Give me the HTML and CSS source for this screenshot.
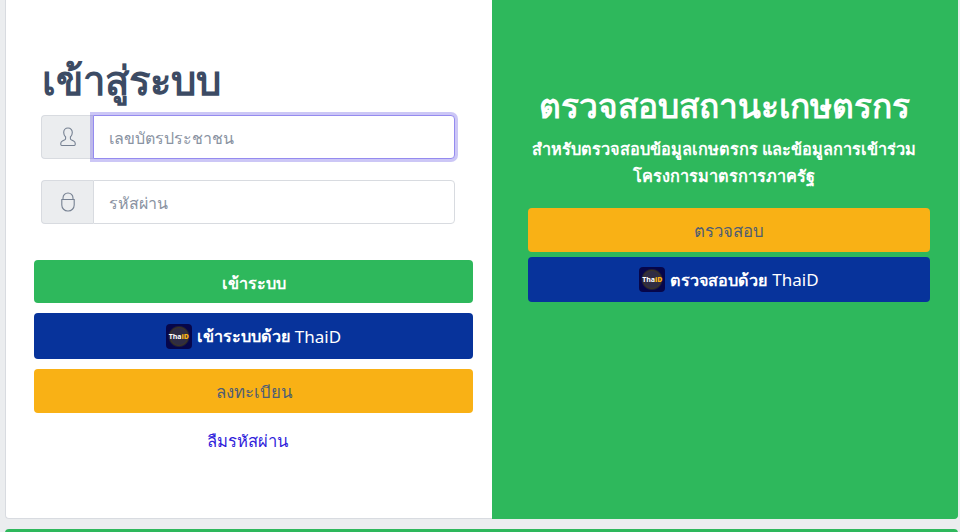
FILE: index.html
```html
<!DOCTYPE html>
<html lang="th">
<head>
<meta charset="utf-8">
<title>เข้าสู่ระบบ</title>
<link rel="stylesheet" href="styles.css">
</head>
<body>
<main class="card-group">
  <section class="card login">
    <h1 class="login-title">เข้าสู่ระบบ</h1>
    <div class="input-group focused">
      <span class="addon">
        <svg class="icon" viewBox="0 0 16 20" fill="none" stroke="currentColor" stroke-width="1.1"><path d="M8 1c-2.700 0-4.300 1.900-4.300 4.500 0 1.900.8 3.400 1.900 4.500v1.500c0 .8-.4 1.300-1.200 1.600l-2 .9c-1 .5-1.600 1.200-1.600 2.300v1.300c0 .6.400.9.900.9h12.600c.5 0 .9-.3.9-.9v-1.300c0-1.100-.6-1.800-1.600-2.300l-2-.9c-.8-.3-1.200-.8-1.200-1.600V10c1.100-1.100 1.900-2.600 1.900-4.500C12.300 2.900 10.700 1 8 1z"/></svg>
      </span>
      <input class="control focus" type="text" placeholder="เลขบัตรประชาชน">
    </div>
    <div class="input-group second">
      <span class="addon">
        <svg class="icon" viewBox="0 0 16 20" fill="none" stroke="currentColor" stroke-width="1.1"><path d="M3 7.500V6a5 5 0 0 1 10 0v1.500"/><path d="M1.800 7.500h12.400V13a6 6 0 0 1-6 6h-.4a6 6 0 0 1-6-6z"/></svg>
      </span>
      <input class="control" type="password" placeholder="รหัสผ่าน">
    </div>
    <div class="actions">
      <button class="btn green" type="button">เข้าระบบ</button>
      <button class="btn blue" type="button">
        <span class="thaid"><span>Tha</span><b>iD</b></span><strong>เข้าระบบด้วย</strong> ThaiD
      </button>
      <button class="btn amber" type="button">ลงทะเบียน</button>
    </div>
    <a class="forgot" href="#">ลืมรหัสผ่าน</a>
  </section>
  <section class="card check">
    <h2 class="check-title">ตรวจสอบสถานะเกษตรกร</h2>
    <p class="check-text">สำหรับตรวจสอบข้อมูลเกษตรกร และข้อมูลการเข้าร่วม<br>โครงการมาตรการภาครัฐ</p>
    <button class="btn amber tall" type="button">ตรวจสอบ</button>
    <button class="btn blue" type="button">
      <span class="thaid"><span>Tha</span><b>iD</b></span><strong>ตรวจสอบด้วย</strong> ThaiD
    </button>
  </section>
</main>
<div class="footer-bar"></div>
</body>
</html>
```
FILE: styles.css
```css
* { box-sizing: border-box; }
html, body { margin: 0; height: 532px; overflow: hidden; }
body {
  background: #ebedef;
  font-family: "Noto Sans", "Open Sans", "Liberation Sans", sans-serif;
  color: #4f5d73;
  font-size: 16px;
  padding: 0 2px 0 5px;
}
.card-group { display: flex; height: 519px; }
.card { border: 1px solid #d8dbe0; border-top: 0; }
.login {
  width: 487px;
  background: #fff;
  border-right: 0;
  border-radius: 0 0 0 4px;
  padding: 45px 19px 0 28px;
}
.login-title {
  margin: 0 0 0 8px;
  font-size: 40px;
  line-height: 70px;
  font-weight: 600;
  color: #3c4b64;
}
.input-group { display: flex; width: 414px; margin-left: 7px; height: 44px; }
.second { margin-top: 21px; }
.addon {
  width: 52px;
  display: flex;
  align-items: center;
  justify-content: center;
  background: #ebedef;
  border: 1px solid #d8dbe0;
  border-right: 0;
  border-radius: 4px 0 0 4px;
  color: #768192;
}
.icon { width: 16px; height: 20px; display: block; }
.control {
  flex: 1;
  min-width: 0;
  border: 1px solid #d8dbe0;
  border-radius: 0 4px 4px 0;
  padding: 2px 14.500px 0;
  font: inherit;
  color: #768192;
  background: #fff;
  outline: 0;
}
.control::placeholder { color: #8a93a2; opacity: 1; }
.control.focus {
  border-color: #958bef;
  box-shadow: 0 0 0 3px rgba(50, 31, 219, .25);
}
.actions { display: flex; flex-direction: column; gap: 10px; margin-top: 36px; }
.actions .blue { height: 46px; }
.btn {
  display: flex;
  align-items: center;
  justify-content: center;
  width: 100%;
  height: 45px;
  border: 0;
  border-radius: 4px;
  font: inherit;
  font-size: 17px;
  font-weight: 400;
  padding: 0;
}
.btn strong { font-size: 16.200px; font-weight: 600; margin-right: 5px; }
.green { height: 43px; padding-top: 2px; background: #2eb85c; color: #fff; font-size: 16.200px; font-weight: 600; }
.blue { background: #07339b; color: #fff; }
.amber { height: 44px; padding-top: 2px; background: #f9b115; color: #4f5d73; font-size: 16.800px; font-weight: 500; }
.thaid {
  width: 26px;
  height: 25px;
  margin-right: 5px;
  border-radius: 4px;
  background: radial-gradient(circle at 50% 50%, #2f2c44 0 8px, #3b3526 9px, #06064a 11px);
  display: flex;
  align-items: center;
  justify-content: center;
  font-size: 7px;
  line-height: 1;
  font-weight: 700;
  color: #fff;
}
.thaid b { color: #f9b115; }
.forgot {
  display: block;
  text-align: center;
  margin: 16px 0 0 -12px;
  line-height: 24px;
  font-size: 16.600px;
  color: #321fdb;
  text-decoration: none;
  font-weight: 500;
}
.check {
  flex: 1;
  background: #2eb85c;
  border-color: #2eb85c;
  border-radius: 0 0 4px 0;
  color: #fff;
  padding: 82px 27px 0 35px;
  text-align: center;
}
.check-title {
  margin: 0 10px 0 0;
  font-size: 33.500px;
  line-height: 46px;
  font-weight: 600;
  white-space: nowrap;
}
.check-text {
  margin: 8px 10px 18px 0;
  font-size: 16.300px;
  line-height: 27px;
  font-weight: 600;
  white-space: nowrap;
}
.tall { margin-bottom: 5px; }
.footer-bar {
  height: 4px;
  margin-top: 10px;
  background: #2eb85c;
  border-radius: 4px 4px 0 0;
}
```
